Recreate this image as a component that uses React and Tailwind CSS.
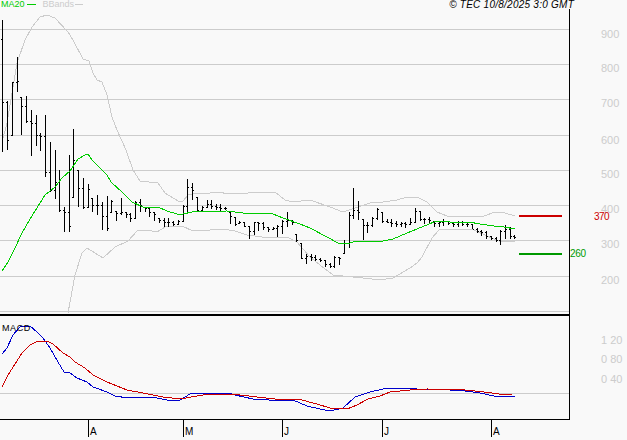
const ma20 = "2,271 8,262 15,248 22,233 30,219 40,203 45,195 55,187 62,178 70,171 78,159 85,155 88,154 92,160 102,170 107,175 111,182 123,193 132,202 143,207 158,207 167,211 177,214 183,214 192,212 227,211 243,213 273,214 283,218 300,224 310,228 327,237 338,243 350,243 353,242 383,241 393,239 407,233 417,229 434,222 440,221 450,222 469,222 480,224 494,226 504,227 515,229";
const bandUp = "2,142 7,123 13,87 17,63 25,40 32,27 40,17 47,15 55,18 68,32 73,40 83,59 89,61 93,73 97,80 102,82 107,95 112,117 117,130 126,150 133,170 140,181 158,183 165,193 178,201 183,201 188,195 197,193 210,193 217,192 230,194 267,192 275,192 285,200 293,202 310,200 330,207 343,212 370,203 383,202 397,200 407,197 417,197 427,202 437,212 447,216 484,216 495,212 505,213 515,216";
const bandLow = "68,313 75,275 82,253 87,248 103,258 115,247 128,241 137,231 147,230 157,232 165,227 182,226 193,231 210,230 222,229 235,231 247,235 270,238 287,237 297,242 310,257 320,265 333,275 363,278 380,280 393,278 410,268 417,263 422,257 432,238 439,230 447,229 472,229 487,236 499,241 509,242 515,241";
const macdBlue = "2,354 7,348 13,335 20,327 30,326 37,332 43,338 50,348 58,362 64,372 69,372 77,378 87,382 93,387 107,392 115,396 128,398 143,397 157,398 167,400 180,400 190,394 210,393 228,393 235,395 253,399 285,401 293,400 307,406 320,409 330,411 343,408 355,397 370,392 383,389 398,388 417,389 437,389 450,390 465,391 480,393 494,396 515,396";
const macdRed = "2,387 8,375 22,353 30,345 38,341 47,341 53,344 63,353 70,357 75,362 85,368 93,375 107,382 127,390 143,393 163,397 180,399 197,396 210,394 240,395 257,397 275,399 298,399 317,404 330,408 347,409 357,405 368,399 380,396 390,392 410,390 427,389 465,390 484,392 499,394 512,395";

// x, high, low, close
const bars = [
  [2,20,152,102],[7,101,150,140],[12,82,135,82],[17,57,92,81],[21,97,135,106],[26,96,123,121],[31,110,156,123],[36,115,146,135],[40,133,151,136],
  [45,115,177,172],[50,142,192,190],[55,150,199,182],[59,170,212,210],[64,207,232,212],[69,155,232,226],[73,129,197,160],[78,170,207,188],[83,178,209,207],
  [88,184,207,189],[92,198,212,205],[97,195,215,205],[102,202,230,216],[107,196,231,228],[111,200,212,201],[116,211,221,213],[121,198,215,212],[126,212,218,214],
  [130,213,222,218],[135,201,219,202],[140,199,212,205],[145,207,212,208],[149,207,217,212],[154,212,221,214],[159,218,223,220],[164,218,227,222],
  [168,218,227,222],[173,221,226,224],[178,220,225,221],[183,205,222,206],[187,179,213,187],[192,183,200,190],[197,197,212,210],[202,206,211,207],[207,200,207,204],
  [211,200,209,206],[216,204,210,207],[220,204,211,208],[225,207,210,208],[230,212,224,216],[235,217,226,224],[239,221,223,222],[244,222,227,226],[249,226,239,231],
  [254,222,235,222],[258,222,231,223],[263,222,230,227],[268,227,232,229],[273,227,230,228],[277,225,237,226],[282,220,234,221],[287,212,227,220],[292,220,225,222],
  [296,234,242,240],[301,243,259,258],[306,254,264,256],[311,254,261,257],[315,255,261,259],[320,258,262,260],[325,260,267,264],[330,263,268,266],[334,256,268,257],[339,257,265,258],
  [344,240,253,243],[349,212,248,215],[353,188,219,210],[358,201,220,212],[363,219,240,225],[367,222,233,225],[372,217,227,218],[377,208,220,209],[382,212,223,221],[387,219,223,222],
  [391,219,227,223],[396,221,227,224],[401,222,227,223],[405,222,228,224],[410,218,224,222],[415,208,222,211],[420,211,221,219],[424,218,224,219],[429,217,223,220],[434,221,227,223],
  [439,222,227,222],[443,219,226,221],[448,221,225,223],[453,222,227,224],[458,221,227,222],[462,221,226,224],[467,222,227,224],[472,224,229,229],[477,228,233,231],[481,230,236,232],
  [486,231,239,236],[491,236,240,238],[496,237,242,240],[500,230,245,231],[505,225,239,229],[510,227,239,236],[514,235,239,237],
];

const gridPrice = [29, 64, 99, 135, 170, 205, 240, 276, 311];
const priceAxis = [[900, 34], [800, 68], [700, 103], [600, 140], [500, 174], [400, 209], [300, 244], [200, 280]];
const macdAxis = [["1 20", 340], ["0 80", 359], ["0 40", 379]];
const months = [["A", 95], ["M", 99], ["J", 100], ["J", 109], ["A", 40]];

function PriceBars() {
  return bars.map(([x, hi, lo, c], i) => {
    const prev = i > 0 ? bars[i - 1][3] : 39;
    const o = Math.min(lo, Math.max(hi, prev));
    const px = x + 0.5;
    return (
      <path
        key={x}
        d={`M${px} ${hi}V${lo}M${px - 1.5} ${o + 0.5}H${px}M${px} ${c + 0.5}H${px + 1.5}`}
        stroke="#000"
        fill="none"
      />
    );
  });
}

export default function App() {
  return (
    <div className="w-[627px] h-[440px] flex flex-col bg-[#f9f9f9] font-['Liberation_Sans',sans-serif] text-[11px] leading-none overflow-hidden">
      <div className="h-[9px] flex items-start justify-between">
        <div className="flex items-center pl-px text-[9px]">
          <span className="text-[#00cc00]">MA20</span>
          <span className="w-[9px] h-px ml-[2px] bg-[#00cc00]" />
          <span className="ml-[7px] text-[#cccccc]">BBands</span>
          <span className="w-[8px] h-px ml-px bg-[#cccccc]" />
        </div>
        <span className="mr-[53px] italic text-black text-[10px] tracking-[0.25px]">© TEC 10/8/2025 3:0 GMT</span>
      </div>

      <div className="flex h-[411px]">
        <div className="w-[570px] flex flex-col border-r border-b border-black">
          <svg className="h-[305px] w-[569px] shrink-0" viewBox="0 9 569 305" shapeRendering="crispEdges">
            {gridPrice.map((y) => (
              <line key={y} x1="0" x2="569" y1={y + 0.5} y2={y + 0.5} stroke="#cccccc" />
            ))}
            <polyline points={bandUp} fill="none" stroke="#cccccc" />
            <polyline points={bandLow} fill="none" stroke="#cccccc" />
            <PriceBars />
            <polyline points={ma20} fill="none" stroke="#00cc00" />
            <line x1="519" x2="562" y1="216" y2="216" stroke="#cc0000" strokeWidth="2" />
            <line x1="519" x2="562" y1="254" y2="254" stroke="#009900" strokeWidth="2" />
          </svg>
          <div className="h-[2px] bg-black shrink-0" />
          <div className="relative flex-1">
            <svg className="h-[103px] w-[569px]" viewBox="0 316 569 103" shapeRendering="crispEdges">
              <line x1="0" x2="569" y1="393.5" y2="393.5" stroke="#cccccc" />
              <polyline points={macdBlue} fill="none" stroke="#0000cc" />
              <polyline points={macdRed} fill="none" stroke="#cc0000" />
            </svg>
            <span className="absolute left-[2px] top-[8px] text-black text-[9px] tracking-[0.6px]">MACD</span>
          </div>
        </div>

        <div className="relative flex-1 text-[#cccccc]">
          {priceAxis.map(([v, y]) => (
            <span key={v} className="absolute left-[31px] -translate-y-1/2" style={{ top: y - 9 }}>{v}</span>
          ))}
          {macdAxis.map(([v, y]) => (
            <span key={v} className="absolute left-[31px] -translate-y-1/2" style={{ top: y - 9 }}>{v}</span>
          ))}
          <span className="absolute left-[24px] top-[203px] text-[#cc0000] text-[10px] tracking-[-0.5px]">370</span>
          <span className="absolute left-0 top-[240px] text-[#009900] text-[10px] tracking-[-0.3px]">260</span>
        </div>
      </div>

      <div className="flex pl-[88px]">
        {months.map(([m, w], i) => (
          <div key={i} className="flex h-[17px] items-end" style={{ width: w }}>
            <span className="w-px h-full bg-black" />
            <span className="ml-[1px] text-black text-[10px]">{m}</span>
          </div>
        ))}
      </div>
    </div>
  );
}
